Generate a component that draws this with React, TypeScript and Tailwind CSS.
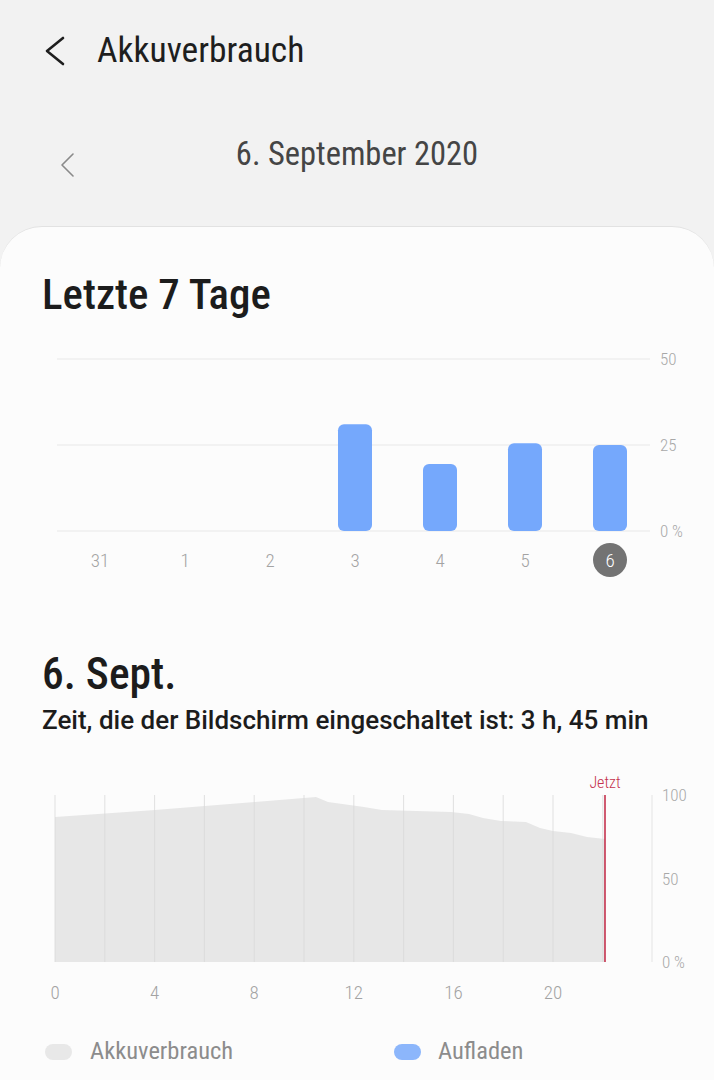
import React from "react";

const bars = [
  { day: "31", value: 0 },
  { day: "1", value: 0 },
  { day: "2", value: 0 },
  { day: "3", value: 31 },
  { day: "4", value: 19.5 },
  { day: "5", value: 25.5 },
  { day: "6", value: 25 },
];

// battery level outline of the day, in chart pixels
const usage: [number, number][] = [
  [55, 49], [155, 42], [205, 38], [255, 34], [316, 29], [328, 34],
  [364, 39], [382, 42], [451, 44], [469, 46], [483, 50], [501, 53],
  [526, 54], [540, 60], [553, 63], [571, 65], [587, 69], [605, 71],
];

const WeekChart = () => {
  // 0 % line at y=191, 50 at y=19
  return (
    <svg width="714" height="250" className="block font-['Roboto_Condensed',sans-serif] font-light">
      {[19, 105, 191].map((y) => (
        <line key={y} x1="57" x2="650" y1={y} y2={y} stroke="#e8e8e8" strokeWidth="1.2" />
      ))}
      <text x="660" y="25" fontSize="17" fill="#a8a8a8">50</text>
      <text x="660" y="111" fontSize="17" fill="#a8a8a8">25</text>
      <text x="660" y="197" fontSize="17" fill="#a8a8a8">0 %</text>
      {bars.map((b, i) => {
        const cx = 100 + i * 85;
        const h = (b.value / 50) * 172;
        return (
          <g key={b.day}>
            {h > 0 && <rect x={cx - 17} y={191 - h} width="34" height={h} rx="6" fill="#75a8fc" />}
            {i === 6 && <circle cx={cx} cy="220" r="17" fill="#737373" />}
            <text
              x={cx}
              y="227"
              fontSize="19"
              textAnchor="middle"
              fill={i === 6 ? "#ffffff" : "#a3a3a3"}
            >
              {b.day}
            </text>
          </g>
        );
      })}
    </svg>
  );
};

const DayChart = () => {
  const xh = (h: number) => 55 + h * 24.9;
  const area = usage.map(([x, y]) => `${x},${y}`).join(" ") + " 605,194 55,194";
  return (
    <svg width="714" height="240" className="block font-['Roboto_Condensed',sans-serif] font-light">
      <polygon points={area} fill="#e7e7e7" />
      {Array.from({ length: 12 }).map((_, i) => (
        <line key={i} x1={xh(i * 2)} x2={xh(i * 2)} y1="27" y2="194" stroke="#d9d9d9" strokeWidth="0.8" />
      ))}
      <line x1="652" x2="652" y1="27" y2="194" stroke="#dedede" strokeWidth="0.8" />
      <line x1="605" x2="605" y1="27" y2="194" stroke="#c4314d" strokeWidth="1.6" />
      <text x="605" y="20" fontSize="16" textAnchor="middle" fill="#c4314d">Jetzt</text>
      <text x="662" y="33" fontSize="17" fill="#a8a8a8">100</text>
      <text x="662" y="117" fontSize="17" fill="#a8a8a8">50</text>
      <text x="662" y="200" fontSize="17" fill="#a8a8a8">0 %</text>
      {[0, 4, 8, 12, 16, 20].map((h) => (
        <text key={h} x={xh(h)} y="231" fontSize="19" textAnchor="middle" fill="#a3a3a3">
          {h}
        </text>
      ))}
    </svg>
  );
};

export default function App() {
  return (
    <div className="w-[714px] h-[1080px] overflow-hidden bg-[#f2f2f2] font-['Roboto_Condensed',sans-serif]">
      {/* header */}
      <div className="h-[102px] flex items-center">
        <svg width="24" height="30" viewBox="0 0 24 30" className="ml-[43px]">
          <polyline
            points="20,2 4,15 20,28"
            fill="none"
            stroke="#1e1e1e"
            strokeWidth="2.6"
            strokeLinecap="round"
            strokeLinejoin="round"
          />
        </svg>
        <span className="ml-[30px] text-[35.5px] leading-none text-[#1e1e1e]">Akkuverbrauch</span>
      </div>

      {/* date selector */}
      <div className="h-[104px] flex items-center relative">
        <svg width="16" height="26" viewBox="0 0 16 26" className="ml-[60px] mt-[24px]">
          <polyline
            points="13,1 2,12 13,23"
            fill="none"
            stroke="#8a8a8a"
            strokeWidth="1.6"
            strokeLinecap="round"
            strokeLinejoin="round"
          />
        </svg>
        <span className="absolute left-0 right-0 text-center text-[32.5px] leading-none text-[#454545]">
          6. September 2020
        </span>
      </div>

      {/* card */}
      <div className="mt-[20px] h-[900px] bg-[#fcfcfc] rounded-t-[42px] border-t border-[#e2e2e2] pt-[46px]">
        <h2 className="px-[42px] text-[43px] leading-none font-medium text-[#1c1c1c]">Letzte 7 Tage</h2>
        <div className="mt-[24px]">
          <WeekChart />
        </div>

        <h2 className="mt-[63px] px-[42px] text-[43.5px] leading-none font-medium text-[#1c1c1c]">6. Sept.</h2>
        <p className="mt-[10px] px-[42px] font-['Roboto',sans-serif] text-[26px] leading-none font-medium text-[#1c1c1c]">
          Zeit, die der Bildschirm eingeschaltet ist: 3 h, 45 min
        </p>

        <div className="mt-[35px]">
          <DayChart />
        </div>

        <div className="mt-[28px] h-[32px] px-[45px] flex items-center">
          <div className="w-[349px] flex items-center">
            <span className="w-[27px] h-[16px] rounded-full bg-[#e8e8e8]" />
            <span className="ml-[18px] text-[24.5px] leading-none text-[#8c8c8c]">Akkuverbrauch</span>
          </div>
          <div className="flex items-center">
            <span className="w-[27px] h-[16px] rounded-full bg-[#8cb6fb]" />
            <span className="ml-[17px] text-[24.5px] leading-none text-[#8c8c8c]">Aufladen</span>
          </div>
        </div>
      </div>
    </div>
  );
}
